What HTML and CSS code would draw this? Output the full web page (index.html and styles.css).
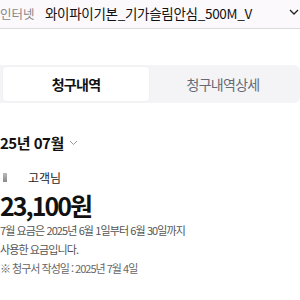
FILE: index.html
```html
<!DOCTYPE html>
<html lang="ko">
<head>
<meta charset="utf-8">
<link rel="stylesheet" href="styles.css">
</head>
<body>
<header class="topbar">
  <span class="svc-label">인터넷</span>
  <span class="svc-name">와이파이기본_기가슬림안심_500M_V</span>
  <svg class="top-chev" width="10" height="6" viewBox="0 0 10 6"><path d="M1 1l4 4 4-4" fill="none" stroke="#222" stroke-width="1.3"/></svg>
</header>
<div class="tabs-wrap">
  <div class="tabs">
    <div class="tab active">청구내역</div>
    <div class="tab">청구내역상세</div>
  </div>
</div>
<main class="bill">
  <div class="month">25년 07월<svg class="month-chev" width="9" height="6" viewBox="0 0 9 6"><path d="M1 1l3.5 3.5L8 1" fill="none" stroke="#999" stroke-width="1"/></svg></div>
  <div class="customer"><span class="cust-mark"></span><span>고객님</span></div>
  <div class="amount">23,100원</div>
  <p class="desc">7월 요금은 2025년 6월 1일부터 6월 30일까지<br>사용한 요금입니다.</p>
  <p class="note">※ 청구서 작성일 : 2025년 7월 4일</p>
</main>
</body>
</html>
```
FILE: styles.css
```css
* { box-sizing: border-box; }
html, body { margin: 0; padding: 0; }
body {
  width: 300px;
  height: 300px;
  overflow: hidden;
  background: #fff;
  font-family: "Noto Sans CJK KR", "Noto Sans", sans-serif;
  color: #111;
}
.topbar {
  height: 29px;
  display: flex;
  align-items: center;
  background: #fcf9fc;
  border-bottom: 1px solid #dcdadc;
  padding: 0 0 2px 0;
}
.svc-label {
  font-size: 12.5px;
  color: #888;
  width: 45px;
  flex: none;
}
.svc-name {
  font-size: 13.5px;
  color: #111;
  letter-spacing: -0.3px;
}
.top-chev {
  margin-left: auto;
  margin-right: 1px;
  margin-top: -2px;
}
.tabs-wrap {
  background: #fff;
  padding: 36px 0 0 0;
}
.tabs {
  display: grid;
  grid-template-columns: 146px 1fr;
  background: #f4f4f6;
  border-radius: 0 6px 6px 0;
  padding: 2px 3px 2px 3px;
  height: 38px;
}
.tab {
  display: flex;
  align-items: center;
  justify-content: center;
  font-size: 14px;
  color: #666a75;
  letter-spacing: -0.7px;
}
.tab.active {
  background: #fff;
  border-radius: 4px;
  color: #111;
  font-weight: 700;
  box-shadow: 0 0 2px rgba(0,0,0,0.04);
}
.bill { padding: 0; }
.month {
  margin: 30px 0 0 0;
  font-size: 15px;
  font-weight: 700;
  display: flex;
  align-items: center;
  letter-spacing: -0.5px;
  height: 18px;
}
.month-chev { margin-left: 5px; margin-top: 2px; }
.customer {
  display: flex;
  align-items: center;
  margin-top: 18px;
  font-size: 12px;
  color: #222;
  height: 16px;
}
.cust-mark {
  width: 4px;
  height: 9px;
  background: linear-gradient(#bbb, #888);
  margin: 0 21px 0 3px;
}
.amount {
  margin-top: 4px;
  font-size: 25px;
  font-weight: 700;
  letter-spacing: -2px;
  height: 32px;
  line-height: 32px;
}
.desc {
  margin: 0;
  font-size: 11px;
  line-height: 19px;
  color: #555;
  letter-spacing: -0.9px;
}
.note {
  margin: 1px 0 0 0;
  font-size: 11px;
  color: #666;
  letter-spacing: -1px;
}
```
